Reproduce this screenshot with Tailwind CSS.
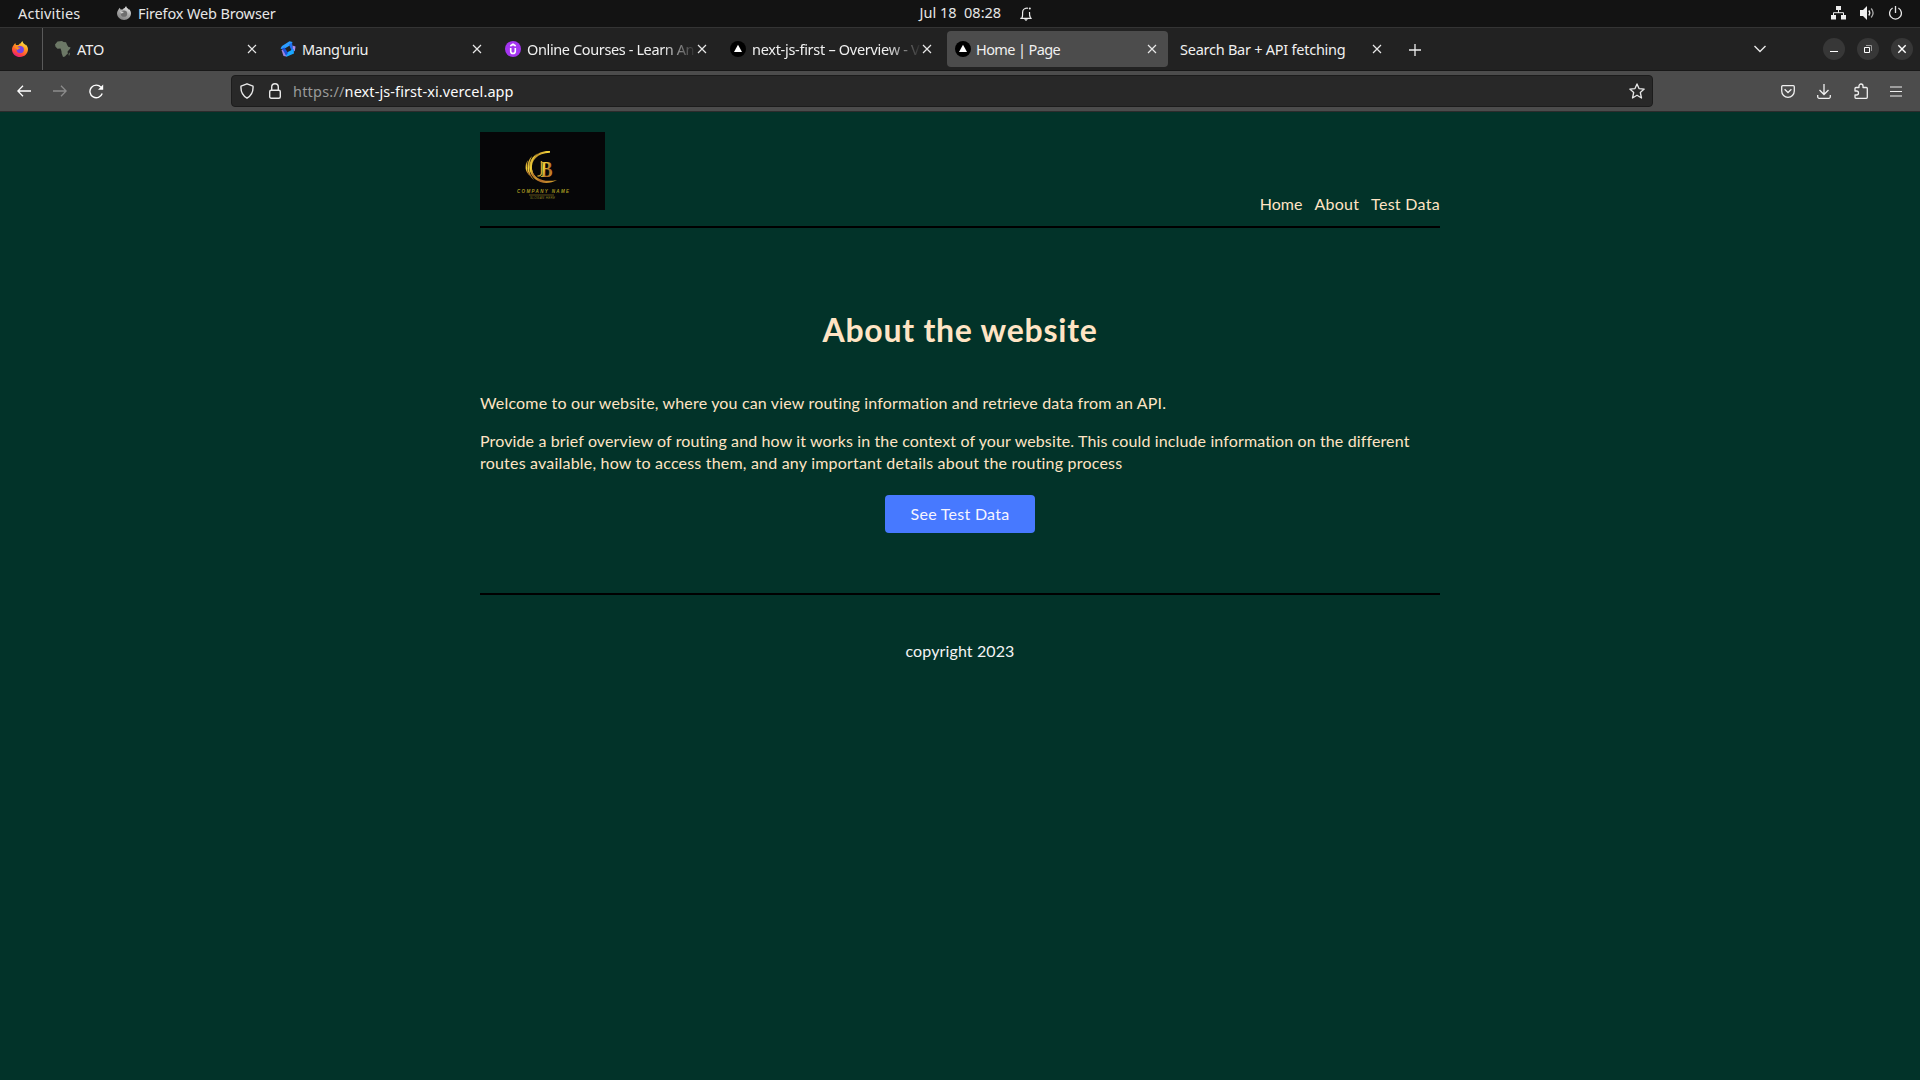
<!DOCTYPE html>
<html lang="en">
<head>
<meta charset="utf-8">
<title>Home | Page</title>
<script src="https://cdn.jsdelivr.net/npm/@tailwindcss/browser@4"></script>
</head>
<body class="h-screen w-screen overflow-hidden flex flex-col bg-[#023329] font-['Noto_Sans','Open_Sans',sans-serif]">

<svg class="absolute w-0 h-0">
  <defs>
    <linearGradient id="fx" x1="0.8" y1="0" x2="0.3" y2="1"><stop offset="0" stop-color="#fff44f"/><stop offset=".4" stop-color="#ff9a1f"/><stop offset=".75" stop-color="#ff4b38"/><stop offset="1" stop-color="#e31587"/></linearGradient>
    <linearGradient id="fg" x1="0.8" y1="0" x2="0.3" y2="1"><stop offset="0" stop-color="#f2f2f2"/><stop offset=".5" stop-color="#aaa"/><stop offset="1" stop-color="#808080"/></linearGradient>
    <linearGradient id="gold" x1="0" y1="0" x2="1" y2="1"><stop offset="0" stop-color="#8a4a1c"/><stop offset=".35" stop-color="#f3d53a"/><stop offset=".65" stop-color="#b06a28"/><stop offset="1" stop-color="#e0b030"/></linearGradient>
    <symbol id="x" viewBox="0 0 10 10"><path d="M1 1l8 8M9 1l-8 8" fill="none" stroke="#e8e8e8" stroke-width="1.2"/></symbol>
    <symbol id="fox" viewBox="0 0 16 16"><path d="M1.2 4.8C1.8 3.6 2.6 2.6 3.4 2c0 .9.3 1.5.7 2 .9-.2 1.7-.1 2.4.1C7 3 8 2.300 8.800 2.200 9.200 1.400 9.900.600 10.400 0c.3 1.700 1.300 2.500 2.300 3.200.3.400.6.800.8 1.200.2-.3.200-.7.100-1.100C15.100 4.800 16 6.600 16 8.300 16 12.600 12.500 16 8.100 16 3.700 16 0 12.700 0 8.400 0 7 .5 5.900 1.200 4.800z"/></symbol>
    <symbol id="vercel" viewBox="0 0 16 16"><circle cx="8" cy="8" r="8" fill="#000"/><path d="M8 3.800L12 11H4z" fill="#fff"/></symbol>
  </defs>
</svg>

<!-- Desktop top bar -->
<div class="h-[27px] shrink-0 bg-[#131313] grid grid-cols-[1fr_auto_1fr] items-center text-[14.5px] text-[#e6e6e6]">
  <div class="flex items-center pl-[18px]">
    <span class="w-[99px] whitespace-nowrap tracking-[0.2px]">Activities</span>
    <svg class="w-[14px] h-[14px] -mt-0.5" viewBox="0 0 16 16"><use href="#fox" fill="url(#fg)"/><circle cx="8" cy="8.800" r="3.600" fill="#6e6e6e"/><path d="M3 6c2 0 3 .6 5 .8-1 1.200-2 1-2.600 2z" fill="#d0d0d0"/></svg>
    <span class="ml-[7px] whitespace-nowrap tracking-[-0.14px]">Firefox Web Browser</span>
  </div>
  <div class="flex items-center pl-[31px] whitespace-nowrap -mt-0.5">
    <span class="w-[100px] whitespace-pre">Jul 18  08:28</span>
    <svg class="w-[12px] h-[14px] mt-0.5" viewBox="0 0 12 14" fill="none" stroke="#eee" stroke-width="1.200"><path d="M.3 11.400h11.400M1.800 11C3 9.500 2.500 8 2.600 5.500 2.700 3 4 1.500 6 1.500M9.500 5c-.1 3 .1 4.700 1 6"/><path d="M5.500 1.200h2.500"/><circle cx="9.800" cy="1.500" r="1" fill="#eee" stroke="none"/><path d="M4 12.300h4L6 14z" fill="#eee" stroke="none"/></svg>
  </div>
  <div class="flex items-center justify-end gap-[14px] pr-[18px] -mt-0.5">
    <svg class="w-[15px] h-[14px]" viewBox="0 0 15 14"><path d="M5 0h5v4H5zM0 9h5v4.500H0zM10 9h5v4.500h-5z" fill="#eee"/><path d="M7.500 4v3M2.500 9V6.700h10V9" fill="none" stroke="#eee"/></svg>
    <svg class="w-[15px] h-[14px]" viewBox="0 0 15 14"><path d="M0 4h3l4-4v14l-4-4H0z" fill="#eee"/><path d="M8.800 4.500q2 2.500 0 5" fill="none" stroke="#eee" stroke-width="1.300"/><path d="M11.200 2.500q3.800 4.500 0 9" fill="none" stroke="#aaa" stroke-width="1.300"/></svg>
    <svg class="w-[13px] h-[14px]" viewBox="0 0 13 14" fill="none" stroke="#e6e6e6" stroke-width="1.300"><path d="M3.600 2a5.900 5.900 0 1 0 5.800 0"/><path d="M6.500 0v7"/></svg>
  </div>
</div>

<!-- Tab strip -->
<div class="h-[44px] shrink-0 bg-[#222222] border-t border-t-[#343434] border-b border-b-[#181818] flex items-center text-[14.5px] text-[#f0f0f0]">
  <div class="w-[43px] h-full border-r border-[#5a5a5a] pl-3 flex items-center">
    <svg class="w-4 h-4" viewBox="0 0 16 16"><use href="#fox" fill="url(#fx)"/><circle cx="8.200" cy="8.600" r="3.700" fill="#7542e5"/><path d="M3 5.800c2 0 3.200.8 5.400 1-1 1.200-2.200 1-2.800 2.200-.8-.6-1.500-1.500-2.600-3.200z" fill="#ff980e"/></svg>
  </div>
  <div class="flex items-center gap-1 pl-1">
    <div class="w-[221px] h-9 px-2 flex items-center">
      <svg class="w-4 h-4 shrink-0" viewBox="0 0 16 16"><path d="M2.500.5L7 0l1.500 1 2.500.3 1.300 3 1.200 1.700 2 .2-.5 1.500-2.400 2.800.2 2.200-1.600 1.300L10 15.500l-2 .5-1.300-3.500-.3-2.500L5.500 7.500 2.500 7.700.5 5.800 0 3.500z" fill="#6c7866"/><path d="M15 11.500l-.6 3-.9-.3.3-1.700z" fill="#6c7866"/></svg>
      <span class="ml-1.5 pt-0.5 flex-1 whitespace-nowrap">ATO</span>
      <svg class="w-[10px] h-[10px] mr-[3px] shrink-0"><use href="#x"/></svg>
    </div>
    <div class="w-[221px] h-9 px-2 flex items-center">
      <svg class="w-4 h-4 shrink-0" viewBox="0 0 16 16" fill="none"><path d="M.5 7.500L2 5 9.500.300 12.500 1 11.500 3.500 3 8.500z" fill="#2c9dff"/><path d="M9 3.500L12 1.500 12.800 7 15 9.500 12 11z" fill="#1e6ff0"/><path d="M12.500 4.500L15.500 5.500 14.800 10.500 12.800 7.500z" fill="#a88be8"/><path d="M6 12L13.500 8 14 12.500 6.500 15.800 5 14.500z" fill="#1aa6ff"/><path d="M1.500 9L4 8.500 6.500 15.500 3.500 15z" fill="#9c84e0"/><path d="M2 7.500L4.500 6.500 8 12 6 14.500z" fill="#1b4fdc"/></svg>
      <span class="ml-1.5 pt-0.5 flex-1 whitespace-nowrap tracking-[-0.4px]">Mang'uriu</span>
      <svg class="w-[10px] h-[10px] mr-[3px] shrink-0"><use href="#x"/></svg>
    </div>
    <div class="w-[221px] h-9 px-2 flex items-center">
      <svg class="w-4 h-4 shrink-0" viewBox="0 0 16 16"><circle cx="8" cy="8" r="8" fill="#a435f0"/><path d="M5.700 7v3.200a2.300 2.300 0 0 0 4.600 0V7M5.300 5L8 3.300 10.700 5" fill="none" stroke="#fff" stroke-width="1.600"/></svg>
      <span class="ml-1.5 pt-0.5 w-[168px] whitespace-nowrap tracking-[-0.38px] [mask-image:linear-gradient(to_right,black_80%,transparent_101%)]">Online Courses - Learn An</span>
      <svg class="w-[10px] h-[10px] ml-[2px] shrink-0"><use href="#x"/></svg>
    </div>
    <div class="w-[221px] h-9 px-2 flex items-center">
      <svg class="w-4 h-4 shrink-0"><use href="#vercel"/></svg>
      <span class="ml-1.5 pt-0.5 w-[168px] whitespace-nowrap tracking-[-0.29px] [mask-image:linear-gradient(to_right,black_80%,transparent_101%)]">next-js-first – Overview - V</span>
      <svg class="w-[10px] h-[10px] ml-[2px] shrink-0"><use href="#x"/></svg>
    </div>
    <div class="w-[221px] h-9 px-2 flex items-center rounded bg-[#4c4c4c]">
      <svg class="w-4 h-4 shrink-0"><use href="#vercel"/></svg>
      <span class="ml-[5px] pt-0.5 flex-1 whitespace-nowrap tracking-[-0.6px]">Home | Page</span>
      <svg class="w-[10px] h-[10px] mr-[3px] shrink-0"><use href="#x"/></svg>
    </div>
    <div class="w-[221px] h-9 px-2 flex items-center">
      <span class="pt-0.5 flex-1 whitespace-nowrap tracking-[-0.25px]">Search Bar + API fetching</span>
      <svg class="w-[10px] h-[10px] mr-[3px] shrink-0"><use href="#x"/></svg>
    </div>
  </div>
  <svg class="w-3 h-3 ml-4 mt-px" viewBox="0 0 12 12"><path d="M6 0v12M0 6h12" stroke="#eee" stroke-width="1.300"/></svg>
  <div class="ml-auto flex items-center pr-[7px]">
    <svg class="w-3 h-2 mr-[57px]" viewBox="0 0 12 8"><path d="M.5 1L6 6.500 11.500 1" fill="none" stroke="#e8e8e8" stroke-width="1.400"/></svg>
    <div class="flex gap-3">
      <svg class="w-[22px] h-[22px]" viewBox="0 0 22 22"><circle cx="11" cy="11" r="11" fill="#373737"/><path d="M7 13.500h8" stroke="#fff"/></svg>
      <svg class="w-[22px] h-[22px]" viewBox="0 0 22 22"><circle cx="11" cy="11" r="11" fill="#373737"/><path d="M7.500 9.500h5v5h-5z" fill="none" stroke="#fff"/><path d="M9 7.500h5.500V13" fill="none" stroke="#999"/></svg>
      <svg class="w-[22px] h-[22px]" viewBox="0 0 22 22"><circle cx="11" cy="11" r="11" fill="#373737"/><path d="M7.300 7.300l7.400 7.400M14.700 7.300l-7.400 7.400" stroke="#fff" stroke-width="1.400"/></svg>
    </div>
  </div>
</div>

<!-- Navigation toolbar -->
<div class="h-[41px] shrink-0 bg-[#4c4c4c] border-b border-b-[#2c2c2c] flex items-center text-[14.5px]">
  <div class="w-[231px] pl-[17px] flex items-center gap-[22px]">
    <svg class="w-[14px] h-3" viewBox="0 0 14 12" fill="none" stroke="#fff" stroke-width="1.300"><path d="M14 6H1M6 .7L.8 6 6 11.300"/></svg>
    <svg class="w-[14px] h-3" viewBox="0 0 14 12" fill="none" stroke="#8c8c8c" stroke-width="1.300"><path d="M0 6h13M8 .7L13.200 6 8 11.300"/></svg>
    <svg class="w-[15px] h-[15px]" viewBox="0 0 15 15"><path d="M13.200 9.500A6.300 6.300 0 1 1 12 3.300" fill="none" stroke="#fff" stroke-width="1.400"/><path d="M14.200.5v5.300H9z" fill="#fff"/></svg>
  </div>
  <div class="w-[1422px] h-8 rounded border border-[#1c1c1c] bg-[#282828] flex items-center pl-2 pr-[7px]">
    <svg class="w-[14px] h-4" viewBox="0 0 14 16" fill="none" stroke="#e8e8e8" stroke-width="1.400"><path d="M7 .8l6 2.300c.4 5-1.200 9.400-6 12.100C2.200 12.500.6 8.100 1 3.100z" stroke-linejoin="round"/></svg>
    <svg class="w-3 h-4 ml-[15px]" viewBox="0 0 12 16" fill="none" stroke="#e8e8e8" stroke-width="1.400"><rect x=".7" y="7.200" width="10.600" height="8" rx="1.500"/><path d="M2.700 7V4a3.300 3.300 0 0 1 6.600 0v3"/></svg>
    <span class="ml-3 pt-0.5 whitespace-nowrap text-[#fbfbfb]"><span class="text-[#9a9a9a] tracking-[0.2px]">https://</span><span class="tracking-[0.09px]">next-js-first-xi.vercel.app</span></span>
    <svg class="w-4 h-4 ml-auto" viewBox="0 0 16 16" fill="none" stroke="#e8e8e8" stroke-width="1.300" stroke-linejoin="round"><path d="M8 .9l2 4.700 5.200.5-3.900 3.400 1.200 5.500L8 12.200 3.500 15l1.200-5.500L.8 6.100 6 5.600z"/></svg>
  </div>
  <div class="ml-auto flex items-center pr-[18px]">
    <svg class="w-[14px] h-[13px]" viewBox="0 0 14 13" fill="none" stroke="#f0f0f0" stroke-width="1.300"><path d="M1.700.7h10.600a1 1 0 0 1 1 1V6a6.300 6.300 0 0 1-12.600 0V1.700a1 1 0 0 1 1-1z"/><path d="M3.600 4.300L7 7.500l3.400-3.200"/></svg>
    <svg class="w-[14px] h-[15px] ml-[22px]" viewBox="0 0 14 15" fill="none" stroke="#f0f0f0" stroke-width="1.300"><path d="M7 0v10.500M2.500 6L7 10.500 11.500 6M.7 11v1.800a1.500 1.500 0 0 0 1.500 1.500h9.600a1.500 1.500 0 0 0 1.500-1.500V11"/></svg>
    <svg class="w-[14px] h-4 ml-[23px]" viewBox="0 0 14 16" fill="none" stroke="#f0f0f0" stroke-width="1.300" stroke-linejoin="round"><path d="M1 8V5.500Q1 4.500 2 4.500h3V3a2 2 0 0 1 4 0v1.500h3.300q1 0 1 1v8.800q0 1-1 1H2q-1 0-1-1V12h1.500a2 2 0 0 0 0-4z"/></svg>
    <svg class="w-3 h-[11px] ml-[22px]" viewBox="0 0 12 11"><path d="M0 1h12M0 5.500h12M0 10h12" stroke="#f0f0f0" stroke-width="1.200"/></svg>
  </div>
</div>

<!-- Web page -->
<div class="w-[960px] mx-auto pt-5 text-base leading-[22px] text-[#ffe4c4] font-['Lato',sans-serif]">
  <header class="h-24 border-b-2 border-black flex justify-between">
    <svg class="w-[125px] h-[78px]" viewBox="0 0 125 78">
      <rect width="125" height="78" fill="#060608"/>
      <g fill="url(#gold)">
        <path d="M70 19v1.800C57 21 51 29 52 37c1 9 11 14 25 11-12 7-26 1-27-11C49 28 57 18 70 19z"/>
        <path d="M58 21c-8 7-9 18 0 27-11-6-12-20 0-27z"/>
        <path d="M52 24c-4 8-4 16 2 24-8-6-9-17-2-24z"/>
        <path d="M48 28c-2 6-1 11 2 16-5-4-6-11-2-16z"/>
      </g>
      <text x="60.500" y="44.500" font-family="Liberation Serif,serif" font-size="24" font-weight="bold" fill="url(#gold)" textLength="12" lengthAdjust="spacingAndGlyphs">B</text>
      <path d="M61.500 29v12q0 3-4 3" fill="none" stroke="#c9a030" stroke-width="1.400"/>
      <text x="37" y="61" font-family="Liberation Sans,sans-serif" font-size="4.500" font-style="italic" font-weight="bold" fill="#a89a22" textLength="52">COMPANY NAME</text>
      <path d="M49 63h25" stroke="#8a7420" stroke-width=".7"/>
      <text x="50" y="66.500" font-family="Liberation Sans,sans-serif" font-size="3" font-style="italic" fill="#8f8220" textLength="25">SLOGAN HERE</text>
    </svg>
    <nav class="flex items-end gap-3 pb-[11px]">
      <a class="tracking-[0.05px]">Home</a><a class="tracking-[0.2px]">About</a><a class="tracking-[0.3px]">Test Data</a>
    </nav>
  </header>
  <main class="pt-20">
    <h1 class="text-[32px] leading-[44px] font-bold text-center tracking-[0.744px]">About the website</h1>
    <p class="mt-10 tracking-[0.17px]">Welcome to our website, where you can view routing information and retrieve data from an API.</p>
    <p class="mt-4 whitespace-nowrap"><span class="tracking-[0.127px]">Provide a brief overview of routing and how it works in the context of your website. This could include information on the different</span><br><span class="tracking-[0.2px]">routes available, how to access them, and any important details about the routing process</span></p>
    <div class="flex justify-center mt-[21px]"><a class="w-[150px] h-[38px] rounded bg-[#4779ff] flex items-center justify-center pb-px text-[#f6f4ff] tracking-[0.281px]">See Test Data</a></div>
  </main>
  <footer class="mt-[60px] border-t-2 border-black pt-[45px] text-center text-[#f4f4f4] tracking-[0.119px]">copyright 2023</footer>
</div>
</body>
</html>
